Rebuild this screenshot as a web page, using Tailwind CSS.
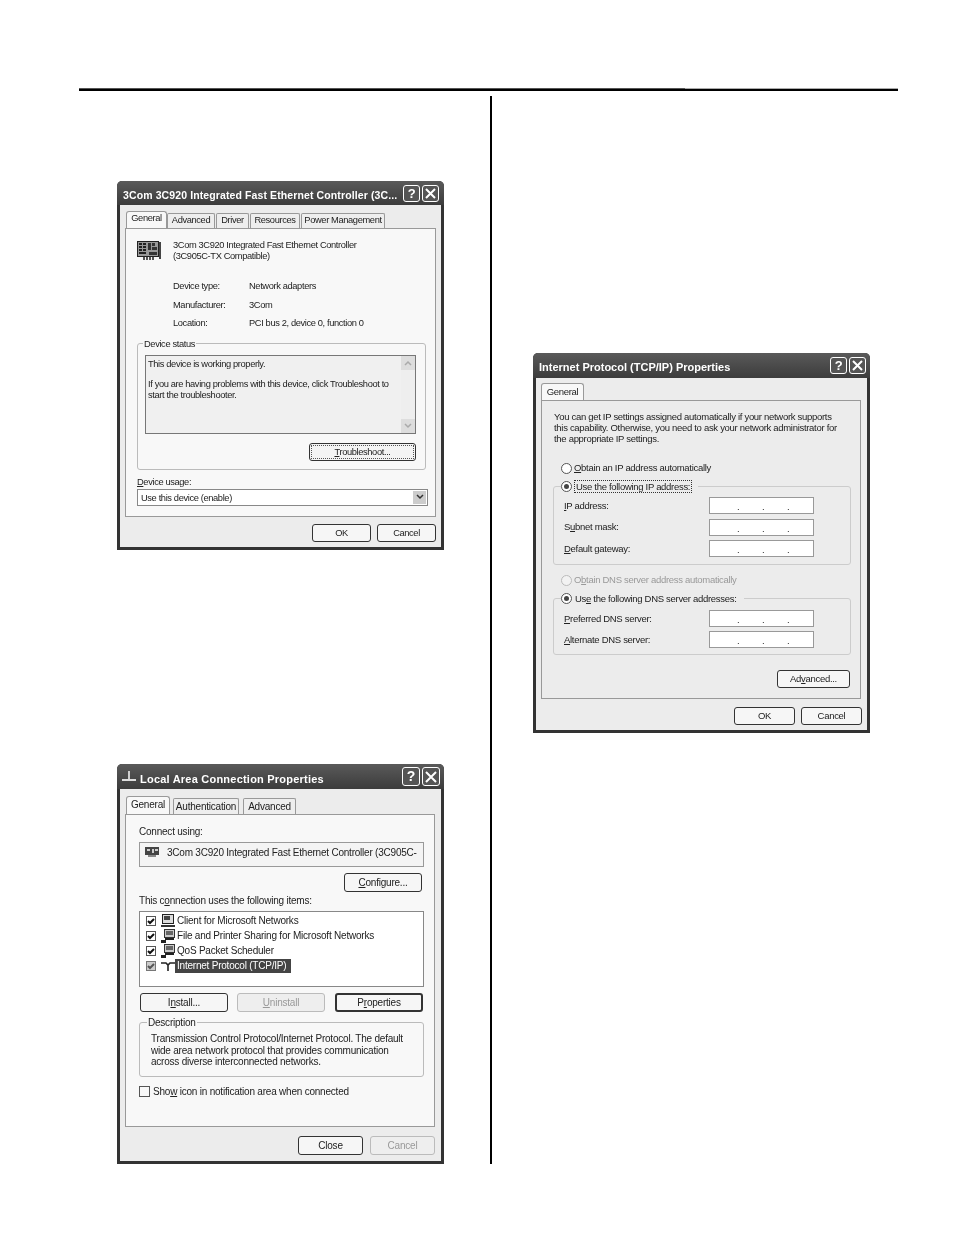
<!DOCTYPE html>
<html lang="en">
<head>
  <meta charset="UTF-8" />
  <title>Network adapter properties</title>
  <script src="https://cdn.jsdelivr.net/npm/@tailwindcss/browser@4"></script>
</head>
<body class="bg-white">
<div class="w-[954px] h-[1235px] pt-[88px] pl-[79px] font-['Liberation_Sans',Arial,sans-serif] text-[10px] tracking-[-0.22px] leading-[12px] text-[#222] overflow-hidden">

  <!-- top rule -->
  <div class="flex w-[819px] h-[3px]">
    <div class="w-[606px] bg-black border-t border-[#555]"></div>
    <div class="flex-1 bg-black border-t border-[#aaa]"></div>
  </div>

  <div class="flex">
    <!-- left column -->
    <div class="w-[411px] pt-[90px] pl-[38px]">

      <!-- adapter dialog -->
      <div class="blur-[0.3px] w-[327px] h-[369px] bg-[#333] rounded-t-[5px] px-[3px] pb-[3px] flex flex-col text-[9.3px] tracking-[-0.37px]">
        <div class="h-[24px] flex items-center justify-between bg-gradient-to-b from-[#5a5a5a] to-[#3c3c3c] -mx-[3px] pl-[6px] pr-[5px] rounded-t-[5px]">
          <span class="mt-[4px] text-white font-bold text-[10.5px] tracking-[0.11px] whitespace-nowrap">3Com 3C920 Integrated Fast Ethernet Controller (3C...</span>
          <div class="flex gap-[2px] shrink-0">
            <div class="w-[17px] h-[17px] border border-white rounded-[3px] bg-[#555] text-white font-bold text-[13px] leading-[15px] text-center">?</div>
            <div class="w-[17px] h-[17px] border border-white rounded-[3px] bg-[#555] flex items-center justify-center">
              <svg width="11" height="11" viewBox="0 0 11 11"><path d="M1 1l9 9M10 1l-9 9" stroke="#fff" stroke-width="2"/></svg>
            </div>
          </div>
        </div>
        <div class="flex-1 bg-[#ececec] flex flex-col">
          <div class="flex items-end mt-[6px] ml-[6px] h-[17px] whitespace-nowrap">
            <div class="w-[41px] h-[17px] bg-[#f8f8f8] border border-b-0 border-[#999] rounded-t-[3px] text-center">General</div>
            <div class="w-[48px] h-[15px] bg-[#eee] border border-b-0 border-[#999] rounded-t-[2px] text-center">Advanced</div>
            <div class="w-[33px] h-[15px] ml-px bg-[#eee] border border-b-0 border-[#999] rounded-t-[2px] text-center">Driver</div>
            <div class="w-[50px] h-[15px] ml-px bg-[#eee] border border-b-0 border-[#999] rounded-t-[2px] text-center">Resources</div>
            <div class="w-[84px] h-[15px] ml-px bg-[#eee] border border-b-0 border-[#999] rounded-t-[2px] text-center">Power Management</div>
          </div>
          <div class="ml-[5px] w-[311px] h-[289px] bg-[#f8f8f8] border border-[#999]">
            <div class="flex">
              <svg class="ml-[11px] mt-[12px]" width="26" height="20" viewBox="0 0 26 20">
                <rect x=".5" y=".5" width="21" height="15" fill="#999" stroke="#222"/>
                <path d="M2 2h3v2h-3zM6 2h3v2h-3zM2 5h3v2h-3zM6 5h3v2h-3zM2 8h3v2h-3zM6 8h3v2h-3zM2 11h7v2h-7z" fill="#222"/>
                <path d="M11 2h3v7h-3zM15 2h3v3h-3zM15 6h5v3h-5zM12 11h8v3h-8z" fill="#333"/>
                <path d="M23 1v17" stroke="#444" stroke-width="2"/>
                <path d="M6 16h2v3h-2zM9 16h2v3h-2zM12 16h2v3h-2zM15 16h2v3h-2z" fill="#555"/>
              </svg>
              <div class="ml-[10px] mt-[11px] leading-[11px] whitespace-nowrap">3Com 3C920 Integrated Fast Ethernet Controller<br>(3C905C-TX Compatible)</div>
            </div>
            <div class="ml-[47px] mt-[15px] grid grid-cols-[76px_1fr] leading-[18.5px]">
              <span>Device type:</span><span>Network adapters</span>
              <span>Manufacturer:</span><span>3Com</span>
              <span>Location:</span><span>PCI bus 2, device 0, function 0</span>
            </div>
            <div class="relative ml-[11px] mt-[10px] w-[289px] h-[127px] border border-[#bbb] rounded-[3px]">
              <span class="absolute left-[5px] -top-[6px] bg-[#f8f8f8] px-px">Device status</span>
              <div class="ml-[7px] mt-[11px] w-[271px] h-[79px] bg-[#f0f0f0] border border-[#777] flex justify-between">
                <div class="pl-[2px] pt-[3px] leading-[10.5px] whitespace-nowrap">
                  <p>This device is working properly.</p>
                  <p class="mt-[10px]">If you are having problems with this device, click Troubleshoot to<br>start the troubleshooter.</p>
                </div>
                <div class="w-[14px] flex flex-col justify-between bg-[#eee]">
                  <div class="h-[14px] bg-[#ddd] flex items-center justify-center"><svg width="8" height="6" viewBox="0 0 8 6"><path d="M1 5l3-3 3 3" fill="none" stroke="#aaa" stroke-width="1.5"/></svg></div>
                  <div class="h-[14px] bg-[#ddd] flex items-center justify-center"><svg width="8" height="6" viewBox="0 0 8 6"><path d="M1 1l3 3 3-3" fill="none" stroke="#aaa" stroke-width="1.5"/></svg></div>
                </div>
              </div>
              <div class="ml-[171px] mt-[9px] w-[107px] h-[18px] p-px border border-[#333] rounded-[3px] bg-[#f4f4f4]">
                <div class="h-full border border-dotted border-[#555] text-center leading-[13px]"><u>T</u>roubleshoot...</div>
              </div>
            </div>
            <div class="ml-[11px] mt-[6px]"><u>D</u>evice usage:</div>
            <div class="ml-[11px] mt-px w-[291px] h-[17px] bg-white border border-[#888] flex items-center justify-between pl-[3px] pr-px">
              <span class="pt-px">Use this device (enable)</span>
              <div class="w-[13px] h-[13px] bg-[#ccc] flex items-center justify-center"><svg width="8" height="6" viewBox="0 0 8 6"><path d="M1 1l3 3 3-3" fill="none" stroke="#333" stroke-width="1.5"/></svg></div>
            </div>
          </div>
          <div class="flex justify-end gap-[6px] pt-[7px] pr-[5px]">
            <div class="w-[59px] h-[18px] border border-[#333] rounded-[3px] bg-[#f6f6f6] text-center leading-[16px]">OK</div>
            <div class="w-[59px] h-[18px] border border-[#333] rounded-[3px] bg-[#f6f6f6] text-center leading-[16px]">Cancel</div>
          </div>
        </div>
      </div>

      <!-- connection properties dialog -->
      <div class="blur-[0.3px] mt-[214px] w-[327px] h-[400px] bg-[#333] rounded-t-[5px] px-[3px] pb-[3px] flex flex-col">
        <div class="h-[25px] flex items-center justify-between bg-gradient-to-b from-[#5a5a5a] to-[#3c3c3c] -mx-[3px] pl-[5px] pr-[4px] rounded-t-[5px]">
          <div class="flex items-center gap-[4px]">
            <svg width="14" height="12" viewBox="0 0 14 12"><path d="M7 0v9M0 9h14" stroke="#ddd" stroke-width="1.8" fill="none"/></svg>
            <span class="mt-[4px] text-white font-bold text-[11px] tracking-[0.22px] whitespace-nowrap">Local Area Connection Properties</span>
          </div>
          <div class="flex gap-[2px] shrink-0">
            <div class="w-[18px] h-[19px] border border-white rounded-[3px] bg-[#555] text-white font-bold text-[14px] leading-[17px] text-center">?</div>
            <div class="w-[18px] h-[19px] border border-white rounded-[3px] bg-[#555] flex items-center justify-center">
              <svg width="12" height="12" viewBox="0 0 12 12"><path d="M1 1l10 10M11 1l-10 10" stroke="#fff" stroke-width="2"/></svg>
            </div>
          </div>
        </div>
        <div class="flex-1 bg-[#ececec] flex flex-col">
          <div class="flex items-end mt-[7px] ml-[6px] h-[18px] whitespace-nowrap">
            <div class="w-[44px] h-[18px] bg-[#f8f8f8] border border-b-0 border-[#999] rounded-t-[3px] text-center leading-[15px]">General</div>
            <div class="w-[66px] h-[16px] ml-[3px] bg-[#eee] border border-b-0 border-[#999] rounded-t-[2px] text-center leading-[15px]">Authentication</div>
            <div class="w-[53px] h-[16px] ml-[4px] bg-[#eee] border border-b-0 border-[#999] rounded-t-[2px] text-center leading-[15px]">Advanced</div>
          </div>
          <div class="ml-[5px] w-[310px] h-[313px] bg-[#f8f8f8] border border-[#999]">
            <div class="ml-[13px] mt-[11px]">Connect using:</div>
            <div class="ml-[13px] mt-[4px] w-[285px] h-[25px] bg-[#f4f4f4] border border-[#999] flex items-start pt-[4px] pl-[5px] gap-[7px]">
              <svg class="shrink-0" width="15" height="11" viewBox="0 0 15 11"><rect width="14" height="8" fill="#444"/><path d="M2 2h3v2h-3zM7 2h2v4h-2zM10 2h3v2h-3z" fill="#ccc"/><rect x="3" y="8" width="8" height="2" fill="#888"/></svg>
              <span class="whitespace-nowrap">3Com 3C920 Integrated Fast Ethernet Controller (3C905C-</span>
            </div>
            <div class="ml-[218px] mt-[6px] w-[78px] h-[19px] border border-[#333] rounded-[3px] bg-[#f6f6f6] text-center leading-[17px]"><u>C</u>onfigure...</div>
            <div class="ml-[13px] mt-[2px] pt-px -mb-px">This c<u>o</u>nnection uses the following items:</div>
            <div class="ml-[13px] mt-[5px] w-[285px] h-[76px] bg-white border border-[#888] pt-px pl-[6px]">
              <div class="flex items-center h-[15px] gap-[5px]">
                <svg width="10" height="10" viewBox="0 0 10 10"><rect x=".5" y=".5" width="9" height="9" fill="#fff" stroke="#555"/><path d="M2 5l2 2 4-4" fill="none" stroke="#111" stroke-width="2"/></svg>
                <svg width="14" height="13" viewBox="0 0 14 13"><rect x="1.5" y=".5" width="11" height="9" fill="#ddd" stroke="#222"/><rect x="3" y="2" width="6" height="4" fill="#444"/><path d="M0 11h14v2h-14z" fill="#333"/></svg>
                <span class="ml-[-3px] whitespace-nowrap">Client for Microsoft Networks</span>
              </div>
              <div class="flex items-center h-[15px] gap-[5px]">
                <svg width="10" height="10" viewBox="0 0 10 10"><rect x=".5" y=".5" width="9" height="9" fill="#fff" stroke="#555"/><path d="M2 5l2 2 4-4" fill="none" stroke="#111" stroke-width="2"/></svg>
                <svg width="14" height="14" viewBox="0 0 14 14"><rect x="3.5" y=".5" width="10" height="8" fill="#ccc" stroke="#333"/><rect x="5" y="2" width="7" height="4" fill="#666"/><path d="M4 9h9v2h-9zM0 11h5v3h-5z" fill="#222"/></svg>
                <span class="ml-[-3px] whitespace-nowrap">File and Printer Sharing for Microsoft Networks</span>
              </div>
              <div class="flex items-center h-[15px] gap-[5px]">
                <svg width="10" height="10" viewBox="0 0 10 10"><rect x=".5" y=".5" width="9" height="9" fill="#fff" stroke="#555"/><path d="M2 5l2 2 4-4" fill="none" stroke="#111" stroke-width="2"/></svg>
                <svg width="14" height="14" viewBox="0 0 14 14"><rect x="3.5" y=".5" width="10" height="8" fill="#ccc" stroke="#333"/><rect x="5" y="2" width="7" height="4" fill="#666"/><path d="M4 9h9v2h-9zM0 11h5v3h-5z" fill="#222"/></svg>
                <span class="ml-[-3px] whitespace-nowrap">QoS Packet Scheduler</span>
              </div>
              <div class="flex items-center h-[15px] gap-[5px]">
                <svg width="10" height="10" viewBox="0 0 10 10"><rect x=".5" y=".5" width="9" height="9" fill="#ccc" stroke="#777"/><path d="M2 5l2 2 4-4" fill="none" stroke="#555" stroke-width="2"/></svg>
                <svg width="14" height="10" viewBox="0 0 14 10"><path d="M0 2h5l2 2 2-2h5M7 4v6" stroke="#222" stroke-width="1.6" fill="none"/></svg>
                <span class="ml-[-5px] w-[116px] h-[14px] bg-[#444] text-white pl-[2px] leading-[14px] whitespace-nowrap">Internet Protocol (TCP/IP)</span>
              </div>
            </div>
            <div class="flex ml-[14px] mt-[6px]">
              <div class="w-[88px] h-[19px] border border-[#333] rounded-[3px] bg-[#f6f6f6] text-center leading-[17px]">I<u>n</u>stall...</div>
              <div class="w-[88px] h-[19px] ml-[9px] border border-[#bbb] rounded-[3px] bg-[#eee] text-[#999] text-center leading-[17px]"><u>U</u>ninstall</div>
              <div class="w-[88px] h-[19px] ml-[10px] border-2 border-[#333] rounded-[3px] bg-[#f6f6f6] text-center leading-[15px]">P<u>r</u>operties</div>
            </div>
            <div class="relative ml-[13px] mt-[10px] w-[285px] h-[55px] border border-[#bbb] rounded-[3px] pt-[10px] pl-[11px] leading-[11.5px] whitespace-nowrap">
              <span class="absolute left-[7px] -top-[6px] bg-[#f8f8f8] px-px leading-[12px]">Description</span>
              <p>Transmission Control Protocol/Internet Protocol. The default<br>wide area network protocol that provides communication<br>across diverse interconnected networks.</p>
            </div>
            <div class="flex items-center ml-[13px] mt-[9px] h-[11px] gap-[3px]">
              <div class="w-[11px] h-[11px] bg-[#f8f8f8] border border-[#555]"></div>
              <span class="whitespace-nowrap">Sho<u>w</u> icon in notification area when connected</span>
            </div>
          </div>
          <div class="flex justify-end gap-[7px] pt-[9px] pr-[6px]">
            <div class="w-[65px] h-[19px] border border-[#333] rounded-[3px] bg-[#f6f6f6] text-center leading-[17px]">Close</div>
            <div class="w-[65px] h-[19px] border border-[#bbb] rounded-[3px] bg-[#eee] text-[#999] text-center leading-[17px]">Cancel</div>
          </div>
        </div>
      </div>
    </div>

    <!-- right column -->
    <div class="mt-[5px] h-[1068px] border-l-2 border-black pt-[257px] pl-[41px]">
      <div class="blur-[0.3px] w-[337px] h-[380px] bg-[#333] rounded-t-[5px] px-[3px] pb-[3px] flex flex-col text-[9.5px] tracking-[-0.3px]">
        <div class="h-[25px] flex items-center justify-between bg-gradient-to-b from-[#5a5a5a] to-[#3c3c3c] -mx-[3px] pl-[6px] pr-[4px] rounded-t-[5px]">
          <span class="mt-[2px] text-white font-bold text-[11px] tracking-normal whitespace-nowrap">Internet Protocol (TCP/IP) Properties</span>
          <div class="flex gap-[2px] shrink-0">
            <div class="w-[17px] h-[17px] border border-white rounded-[3px] bg-[#555] text-white font-bold text-[13px] leading-[15px] text-center">?</div>
            <div class="w-[17px] h-[17px] border border-white rounded-[3px] bg-[#555] flex items-center justify-center">
              <svg width="11" height="11" viewBox="0 0 11 11"><path d="M1 1l9 9M10 1l-9 9" stroke="#fff" stroke-width="2"/></svg>
            </div>
          </div>
        </div>
        <div class="flex-1 bg-[#ececec] flex flex-col">
          <div class="mt-[5px] ml-[5px] w-[43px] h-[17px] bg-[#f8f8f8] border border-b-0 border-[#999] rounded-t-[3px] text-center leading-[15px]">General</div>
          <div class="ml-[5px] w-[320px] h-[299px] bg-[#ececec] border border-[#999]">
            <p class="ml-[12px] mt-[10px] leading-[11px] whitespace-nowrap">You can get IP settings assigned automatically if your network supports<br>this capability. Otherwise, you need to ask your network administrator for<br>the appropriate IP settings.</p>
            <div class="flex items-center ml-[19px] mt-[17px] h-[14px] gap-[2px]">
              <div class="w-[11px] h-[11px] bg-white border border-[#555] rounded-full"></div>
              <span class="whitespace-nowrap"><u>O</u>btain an IP address automatically</span>
            </div>
            <div class="relative ml-[11px] mt-[11px] w-[298px] h-[79px] border border-[#ccc] rounded-[3px] pt-[10px] pl-[10px]">
              <div class="absolute left-[7px] -top-[7px] flex items-center gap-[2px] bg-[#ececec] pr-[6px] h-[13px]">
                <div class="w-[11px] h-[11px] bg-white border border-[#555] rounded-full flex items-center justify-center"><div class="w-[5px] h-[5px] rounded-full bg-[#444]"></div></div>
                <span class="border border-dotted border-[#333] px-px leading-[11px] whitespace-nowrap">Use the following IP address:</span>
              </div>
              <div class="grid grid-cols-[145px_105px] gap-y-[4.5px] items-center">
                <span><u>I</u>P address:</span>
                <div class="h-[17px] bg-white border border-[#999] flex pl-[27px] gap-[24px] leading-[18px]"><span class="w-px">.</span><span class="w-px">.</span><span class="w-px">.</span></div>
                <span>S<u>u</u>bnet mask:</span>
                <div class="h-[17px] bg-white border border-[#999] flex pl-[27px] gap-[24px] leading-[18px]"><span class="w-px">.</span><span class="w-px">.</span><span class="w-px">.</span></div>
                <span><u>D</u>efault gateway:</span>
                <div class="h-[17px] bg-white border border-[#999] flex pl-[27px] gap-[24px] leading-[18px]"><span class="w-px">.</span><span class="w-px">.</span><span class="w-px">.</span></div>
              </div>
            </div>
            <div class="flex items-center ml-[19px] mt-[8px] h-[14px] gap-[2px] text-[#999]">
              <div class="w-[11px] h-[11px] bg-[#f2f2f2] border border-[#bbb] rounded-full"></div>
              <span class="whitespace-nowrap">O<u>b</u>tain DNS server address automatically</span>
            </div>
            <div class="relative ml-[11px] mt-[11px] w-[298px] h-[57px] border border-[#ccc] rounded-[3px] pt-[11px] pl-[10px]">
              <div class="absolute left-[7px] -top-[7px] flex items-center gap-[2px] bg-[#ececec] pr-[6px] h-[13px]">
                <div class="w-[11px] h-[11px] bg-white border border-[#555] rounded-full flex items-center justify-center"><div class="w-[5px] h-[5px] rounded-full bg-[#444]"></div></div>
                <span class="px-px leading-[11px] whitespace-nowrap">Us<u>e</u> the following DNS server addresses:</span>
              </div>
              <div class="grid grid-cols-[145px_105px] gap-y-[4px] items-center">
                <span><u>P</u>referred DNS server:</span>
                <div class="h-[17px] bg-white border border-[#999] flex pl-[27px] gap-[24px] leading-[18px]"><span class="w-px">.</span><span class="w-px">.</span><span class="w-px">.</span></div>
                <span><u>A</u>lternate DNS server:</span>
                <div class="h-[17px] bg-white border border-[#999] flex pl-[27px] gap-[24px] leading-[18px]"><span class="w-px">.</span><span class="w-px">.</span><span class="w-px">.</span></div>
              </div>
            </div>
            <div class="ml-[235px] mt-[15px] w-[73px] h-[18px] border border-[#333] rounded-[3px] bg-[#f6f6f6] text-center leading-[16px]">Ad<u>v</u>anced...</div>
          </div>
          <div class="flex justify-end gap-[6px] pt-[8px] pr-[5px]">
            <div class="w-[61px] h-[18px] border border-[#333] rounded-[3px] bg-[#f6f6f6] text-center leading-[16px]">OK</div>
            <div class="w-[61px] h-[18px] border border-[#333] rounded-[3px] bg-[#f6f6f6] text-center leading-[16px]">Cancel</div>
          </div>
        </div>
      </div>
    </div>
  </div>
</div>
</body>
</html>
